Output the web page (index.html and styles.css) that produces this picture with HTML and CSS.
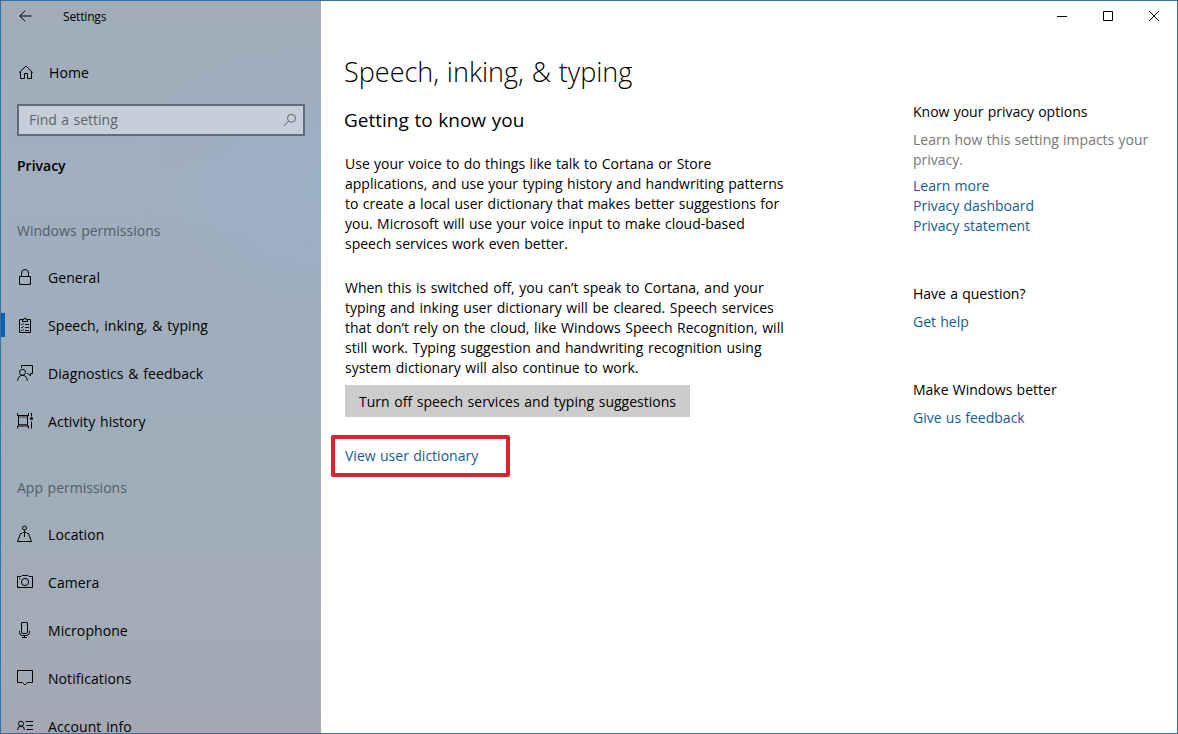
FILE: index.html
```html
<!DOCTYPE html>
<html lang="en">
<head>
<meta charset="utf-8">
<title>Settings</title>
<link rel="stylesheet" href="styles.css">
</head>
<body>
<div class="window">
  <aside class="sidebar">
    <header class="titlebar">
      <svg class="back" width="14" height="12" viewBox="0 0 14 12"><path d="M6.200.7.800 6l5.400 5.300M1 6h11.500"/></svg>
      <span class="app-name">Settings</span>
    </header>
    <a class="nav home"><svg class="icon" width="18" height="18" viewBox="0 0 18 18"><path d="M2.200 9.600 9 3l6.800 6.600M3.500 8.500v7h4v-5h3v5h4v-7"/></svg><span>Home</span></a>
    <div class="search"><span class="search-text">Find a setting</span><svg width="14" height="14" viewBox="0 0 14 14"><circle cx="8.500" cy="5.300" r="4"/><path d="M5.600 8.200.800 13"/></svg></div>
    <h2 class="category">Privacy</h2>
    <h3 class="group">Windows permissions</h3>
    <nav>
      <a class="nav"><svg class="icon" width="18" height="18" viewBox="0 0 18 18"><path d="M2.500 8.500h11v8h-11zM4.500 8.500V5a3.500 3.500 0 0 1 7 0v3.500"/></svg><span>General</span></a>
      <a class="nav selected"><svg class="icon" width="18" height="18" viewBox="0 0 18 18"><path d="M5.500 3.500h-3v13h11v-13h-3M5.500 5.500v-2H7a1 1.500 0 0 1 2 0h1.500v2zM8 8.500h4M8 11.500h4M8 14.500h4"/><path class="fine" d="m4 8 1 1 2-2M4 11l1 1 2-2M4 14l1 1 2-2"/></svg><span>Speech, inking, &amp; typing</span></a>
      <a class="nav"><svg class="icon" width="18" height="18" viewBox="0 0 18 18"><circle cx="5.500" cy="8.300" r="3"/><path d="M.6 16.800c.3-3.300 2.100-5.500 4.900-5.500s4.600 2.200 4.900 5.500M4.500 4V1.500h11v8h-2v2.500L11 9.500h-1"/></svg><span>Diagnostics &amp; feedback</span></a>
      <a class="nav"><svg class="icon" width="18" height="18" viewBox="0 0 18 18"><path d="M.5 1v2.500h11V1M.5 16.500v-2.500h11v2.500M1.500 3.500V14M10.500 3.500V14M14.500 1v3.500M14.500 9.500v7"/><path class="fine" d="M2 5h8M2 12.500h8"/><circle class="solid" cx="14.500" cy="6.500" r="1.500"/></svg><span>Activity history</span></a>
    </nav>
    <h3 class="group app-group">App permissions</h3>
    <nav>
      <a class="nav"><svg class="icon" width="18" height="18" viewBox="0 0 18 18"><circle cx="7.500" cy="3" r="2"/><path d="M7.500 5v7M5 8.500H3.500l-3 8h14l-3-8H10M5.500 7.500h4"/></svg><span>Location</span></a>
      <a class="nav"><svg class="icon" width="18" height="18" viewBox="0 0 18 18"><path d="M.5 3.500H4L5 2.500h6l1 1h3.500v11H.5zM2 5.500h1"/><circle cx="8" cy="9" r="3.600"/></svg><span>Camera</span></a>
      <a class="nav"><svg class="icon" width="18" height="18" viewBox="0 0 18 18"><path d="M4.500 2Q4.500 1.500 5 1.500h5q.5 0 .5.500v9q0 1.500-1.500 1.500H6Q4.500 12.500 4.500 11zM2.500 10v1.500q0 3 3 3h4q3 0 3-3V10M7.500 14.500v2M5 16.500h5"/></svg><span>Microphone</span></a>
      <a class="nav"><svg class="icon" width="18" height="18" viewBox="0 0 18 18"><path d="M.5 1.500h15v12h-5L8 16l-2.500-2.500h-5z"/></svg><span>Notifications</span></a>
      <a class="nav"><svg class="icon" width="18" height="18" viewBox="0 0 18 18"><circle cx="4" cy="6.700" r="2.500"/><path d="M.5 13Q.7 9.200 4 9.200T7.500 13M8.500 4.500H16M9.500 8.500H16M9.500 12.500H16"/></svg><span>Account info</span></a>
    </nav>
  </aside>
  <main class="main">
    <div class="controls">
      <svg width="12" height="12" viewBox="0 0 12 12"><path d="M1 6.500h10"/></svg>
      <svg width="12" height="12" viewBox="0 0 12 12"><path d="M1.500 1.500h9v9h-9z"/></svg>
      <svg width="12" height="12" viewBox="0 0 12 12"><path d="m1 1 10 10M11 1 1 11"/></svg>
    </div>
    <div class="columns">
      <section class="content">
        <h1>Speech, inking, &amp; typing</h1>
        <h2 class="subtitle">Getting to know you</h2>
        <p class="intro">Use your voice to do things like talk to Cortana or Store<br>applications, and use your typing history and handwriting patterns<br>to create a local user dictionary that makes better suggestions for<br>you. Microsoft will use your voice input to make cloud-based<br>speech services work even better.</p>
        <p class="detail">When this is switched off, you can’t speak to Cortana, and your<br>typing and inking user dictionary will be cleared. Speech services<br>that don’t rely on the cloud, like Windows Speech Recognition, will<br>still work. Typing suggestion and handwriting recognition using<br>system dictionary will also continue to work.</p>
        <button class="turn-off">Turn off speech services and typing suggestions</button>
        <div class="highlight"><a class="link">View user dictionary</a></div>
      </section>
      <aside class="related">
        <h4>Know your privacy options</h4>
        <p class="hint">Learn how this setting impacts your<br>privacy.</p>
        <a class="link">Learn more</a>
        <a class="link">Privacy dashboard</a>
        <a class="link">Privacy statement</a>
        <h4 class="question">Have a question?</h4>
        <a class="link spaced">Get help</a>
        <h4 class="better">Make Windows better</h4>
        <a class="link spaced">Give us feedback</a>
      </aside>
    </div>
  </main>
</div>
</body>
</html>
```

FILE: styles.css
```css
* { box-sizing: border-box; }
body { margin: 0; font: 14px/20px "Open Sans", "Noto Sans", sans-serif; color: #000; background: #fff; }
h1, h2, h3, h4, p { margin: 0; font-weight: 400; font-size: inherit; }
svg { fill: none; stroke: #000; stroke-width: 1; flex: none; }
.fine { stroke-width: .7; }
.solid { fill: #000; stroke: none; }
.window { display: grid; grid-template-columns: 320px 1fr; width: 1178px; height: 734px; border: 1px solid #35709f; overflow: hidden; }
.sidebar { height: 732px; overflow: hidden; white-space: nowrap; background: radial-gradient(ellipse 190px 150px at 100% 25%, rgba(152,176,204,.6) 0%, rgba(156,178,205,0) 100%), linear-gradient(180deg, #a2acb9 0%, #a0afbe 25%, #9fadbb 60%, #a2acb8 80%, #a3a8b3 100%); }
.titlebar { display: flex; align-items: center; height: 31px; padding-left: 18px; }
.back { margin-bottom: 1px; }
.app-name { margin-left: 30px; font-size: 12px; letter-spacing: -.15px; }
.nav { display: flex; align-items: center; height: 48px; padding-left: 16px; }
.icon { margin-bottom: 2px; }
.nav span { margin-left: 13px; letter-spacing: .08px; word-spacing: 1px; }
.home { margin-top: 17px; }
.home span { margin-left: 14px; }
.search { display: flex; align-items: center; justify-content: space-between; height: 32px; width: 288px; margin: 7px 0 0 16px; padding: 0 6px 0 10px; border: 2px solid #616d76; background: #c6ced9; color: #5d6369; word-spacing: .8px; }
.search svg { stroke: #5d6369; }
.category { margin: 20px 0 0 16px; font-weight: 600; }
.group { height: 20px; margin: 45px 0 13px 16px; color: #545d66; word-spacing: 1px; }
.app-group { margin-top: 32px; }
.selected { position: relative; }
.selected::before { content: ""; position: absolute; left: 0; top: 11px; width: 4px; height: 24px; background: #0063b1; }
.main { min-width: 0; }
.controls { display: flex; justify-content: flex-end; gap: 34px; padding: 9px 17px 0 0; height: 31px; }
.columns { display: grid; grid-template-columns: 592px 1fr; }
.content { padding-left: 24px; white-space: nowrap; word-spacing: .8px; }
h1 { margin: 22px 0 0 -1px; font-size: 27px; line-height: 36px; font-weight: 300; }
.subtitle { margin: 16px 0 0 -1px; font-size: 19px; line-height: 28px; word-spacing: .7px; }
.intro { margin-top: 20px; word-spacing: .7px; }
.detail { margin-top: 24px; word-spacing: 1px; }
.turn-off { display: block; width: 345px; height: 32px; margin-top: 7px; padding: 1px 0 0 14px; border: 0; background: #ccc; font: inherit; text-align: left; white-space: nowrap; word-spacing: 1px; }
.highlight { display: flex; align-items: center; width: 179px; height: 42px; margin: 18px 0 0 -14px; padding-left: 10px; border: 4px solid #d42530; border-radius: 2px; }
.link { display: block; color: #0f5d92; }
.related { padding-top: 70px; white-space: nowrap; word-spacing: .6px; }
.hint { margin: 8px 0 6px; color: #767676; }
.question { margin-top: 48px; }
.better { margin-top: 48px; }
.spaced { margin-top: 8px; }
```
